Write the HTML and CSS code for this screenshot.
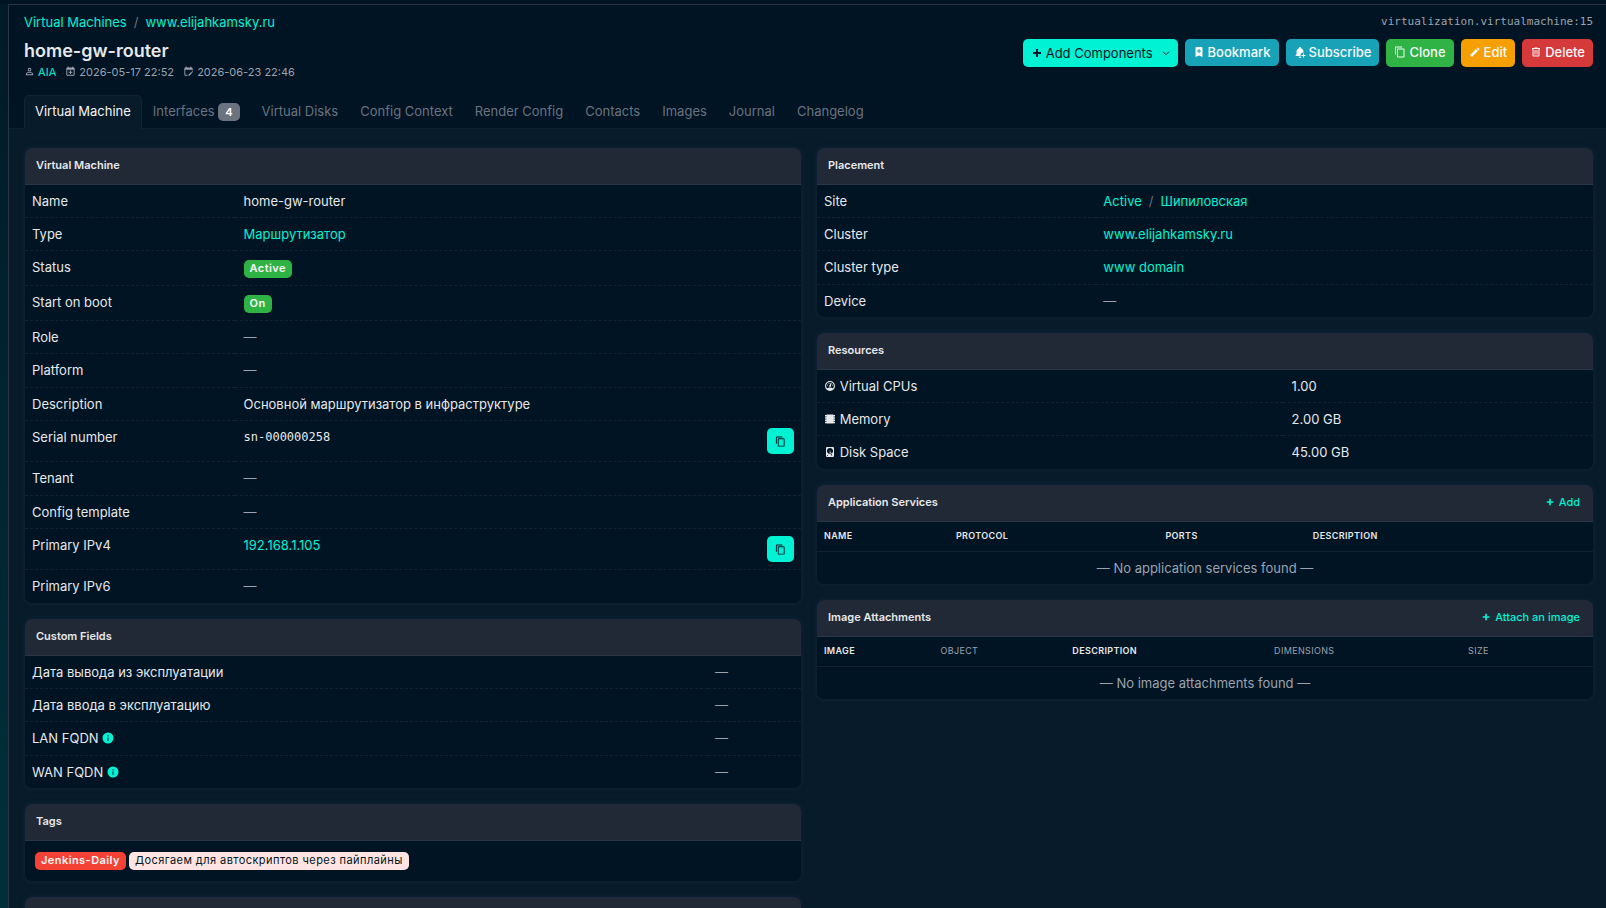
FILE: index.html
```html
<!DOCTYPE html>
<html lang="en">
<head>
    <meta charset="UTF-8">
    <meta name="viewport" content="width=device-width, initial-scale=1.0">
    <title>home-gw-router</title>
    <link rel="stylesheet" href="styles.css">
</head>
<body>
    <!-- icon set, 24x24 grid -->
    <svg class="icon-defs" aria-hidden="true">
        <symbol id="i-plus" viewBox="0 0 24 24"><path d="M20 14h-6v6h-4v-6H4v-4h6V4h4v6h6z"/></symbol>
        <symbol id="i-chevron" viewBox="0 0 24 24"><path d="M3 8l9 9 9-9" fill="none" stroke="currentColor" stroke-width="3"/></symbol>
        <symbol id="i-bookmark" viewBox="0 0 24 24"><path fill-rule="evenodd" d="M17 2H7a2 2 0 0 0-2 2v18l7-3 7 3V4a2 2 0 0 0-2-2zm-1 9h-3v3h-2v-3H8V9h3V6h2v3h3z"/></symbol>
        <symbol id="i-bell" viewBox="0 0 24 24"><path d="M13 19c0 .3 0 .7.1 1H3v-1l2-2v-6c0-3.100 2-5.800 5-6.700V4a2 2 0 0 1 4 0v.3c3 .9 5 3.600 5 6.700v2a6 6 0 0 0-6 6zm-3 2h3.300c.2.700.6 1.300 1 1.800A2 2 0 0 1 10 21zm8-6v3h-3v2h3v3h2v-3h3v-2h-3v-3z"/></symbol>
        <symbol id="i-copy" viewBox="0 0 24 24"><path d="M19 21H8V7h11m0-2H8a2 2 0 0 0-2 2v14a2 2 0 0 0 2 2h11a2 2 0 0 0 2-2V7a2 2 0 0 0-2-2m-3-4H4a2 2 0 0 0-2 2v14h2V3h12z"/></symbol>
        <symbol id="i-pencil" viewBox="0 0 24 24"><path d="M20.700 7c.4-.4.4-1 0-1.400l-2.300-2.300c-.4-.4-1-.4-1.400 0l-1.900 1.800 3.800 3.800M3 17.200V21h3.800L17.800 9.900l-3.700-3.700z"/></symbol>
        <symbol id="i-trash" viewBox="0 0 24 24"><path d="M9 3v1H4v2h1v13a2 2 0 0 0 2 2h10a2 2 0 0 0 2-2V6h1V4h-5V3H9M7 6h10v13H7V6m2 2v9h2V8H9m4 0v9h2V8z"/></symbol>
        <symbol id="i-user" viewBox="0 0 24 24"><path d="M12 4a4 4 0 1 1 0 8 4 4 0 0 1 0-8m0 2a2 2 0 1 0 0 4 2 2 0 0 0 0-4m0 7c2.700 0 8 1.300 8 4v3H4v-3c0-2.700 5.300-4 8-4m0 1.900c-3 0-6.100 1.500-6.100 2.100v1.100h12.200V17c0-.6-3.100-2.100-6.100-2.100z"/></symbol>
        <symbol id="i-cal-plus" viewBox="0 0 24 24"><path d="M19 19V8H5v11h14M16 1h2v2h1a2 2 0 0 1 2 2v14a2 2 0 0 1-2 2H5a2 2 0 0 1-2-2V5c0-1.100.9-2 2-2h1V1h2v2h8V1m-5 8.500h2v3h3v2h-3v3h-2v-3H8v-2h3z"/></symbol>
        <symbol id="i-cal-edit" viewBox="0 0 24 24"><path d="M19 3h-1V1h-2v2H8V1H6v2H5a2 2 0 0 0-2 2v14a2 2 0 0 0 2 2h5v-2H5V8h14v2h2V5a2 2 0 0 0-2-2m2.700 10.300l-1 1-2-2 1-1c.2-.2.5-.2.7 0l1.300 1.300c.2.200.2.500 0 .7M12 18.900V21h2.100l6.100-6.100-2.100-2z"/></symbol>
        <symbol id="i-gauge" viewBox="0 0 24 24"><path d="M12 2a10 10 0 1 0 0 20 10 10 0 0 0 0-20m0 2a8 8 0 0 1 6.200 13c-1.700-1.400-3.900-2-6.200-2s-4.500.6-6.200 2A8 8 0 0 1 12 4m2 1.900c-.4 0-.8.200-1 .7l-1.300 3.200-.1.200a2 2 0 1 0 2.200.8l1.300-3.200c.2-.6 0-1.200-.5-1.500a1 1 0 0 0-.6-.2M10 6a1 1 0 1 0 0 2 1 1 0 0 0 0-2M7 9a1 1 0 1 0 0 2 1 1 0 0 0 0-2m10 0a1 1 0 1 0 0 2 1 1 0 0 0 0-2z"/></symbol>
        <symbol id="i-chip" viewBox="0 0 24 24"><path d="M5 3h14v18H5zM2 4h3v3H2zm0 4.500h3v3H2zM2 13h3v3H2zm0 4.500h3v3H2zM19 4h3v3h-3zm0 4.500h3v3h-3zm0 4.500h3v3h-3zm0 4.500h3v3h-3z"/></symbol>
        <symbol id="i-disk" viewBox="0 0 24 24"><path fill-rule="evenodd" d="M6 2h12a2 2 0 0 1 2 2v16a2 2 0 0 1-2 2H6a2 2 0 0 1-2-2V4a2 2 0 0 1 2-2m6 2a6 6 0 0 0-6 6c0 3.300 2.700 6 6.100 6l-.9-2.200c-.2-.5-.1-1 .4-1.300l.9-.5c.5-.3 1.100-.1 1.400.4l1.700 2.500A6 6 0 0 0 12 4m0 5a1 1 0 1 1 0 2 1 1 0 0 1 0-2m-5 9a1 1 0 1 0 0 2 1 1 0 0 0 0-2m5.100-4.700l3 6.400 1.700-1-3.900-5.900z"/></symbol>
        <symbol id="i-info" viewBox="0 0 24 24"><path fill-rule="evenodd" d="M12 1a11 11 0 1 0 0 22 11 11 0 0 0 0-22m-1 5h2v3h-2zm0 5h2v7h-2z"/></symbol>
    </svg>

    <div class="page">
        <aside class="sidebar"></aside>
        <div class="page-main">
            <header class="page-header">
                <div class="header-row">
                    <nav class="breadcrumb" aria-label="Breadcrumb">
                        <a href="#">Virtual Machines</a>
                        <span class="sep">/</span>
                        <a href="#">www.elijahkamsky.ru</a>
                    </nav>
                    <code class="object-id">virtualization.virtualmachine:15</code>
                </div>
                <div class="header-row">
                    <div>
                        <h1 class="page-title">home-gw-router</h1>
                        <div class="meta">
                            <span><svg class="icon"><use href="#i-user"/></svg> <a href="#">AIA</a></span>
                            <span><svg class="icon"><use href="#i-cal-plus"/></svg> 2026-05-17 22:52</span>
                            <span><svg class="icon"><use href="#i-cal-edit"/></svg> 2026-06-23 22:46</span>
                        </div>
                    </div>
                    <div class="btn-list">
                        <button type="button" class="btn btn-primary"><svg class="icon"><use href="#i-plus"/></svg>Add Components<svg class="icon caret"><use href="#i-chevron"/></svg></button>
                        <button type="button" class="btn btn-cyan"><svg class="icon"><use href="#i-bookmark"/></svg>Bookmark</button>
                        <button type="button" class="btn btn-cyan"><svg class="icon"><use href="#i-bell"/></svg>Subscribe</button>
                        <a href="#" class="btn btn-green"><svg class="icon"><use href="#i-copy"/></svg>Clone</a>
                        <a href="#" class="btn btn-yellow"><svg class="icon"><use href="#i-pencil"/></svg>Edit</a>
                        <a href="#" class="btn btn-red"><svg class="icon"><use href="#i-trash"/></svg>Delete</a>
                    </div>
                </div>
                <nav class="tabs" aria-label="Object views">
                    <a href="#" class="tab active">Virtual Machine</a>
                    <a href="#" class="tab">Interfaces <span class="count">4</span></a>
                    <a href="#" class="tab">Virtual Disks</a>
                    <a href="#" class="tab">Config Context</a>
                    <a href="#" class="tab">Render Config</a>
                    <a href="#" class="tab">Contacts</a>
                    <a href="#" class="tab">Images</a>
                    <a href="#" class="tab">Journal</a>
                    <a href="#" class="tab">Changelog</a>
                </nav>
            </header>

            <main class="page-body">
                <div class="col">
                    <section class="card">
                        <h2 class="card-header">Virtual Machine</h2>
                        <table class="attrs attrs-vm">
                            <tr><th scope="row">Name</th><td>home-gw-router</td></tr>
                            <tr><th scope="row">Type</th><td><a href="#">Маршрутизатор</a></td></tr>
                            <tr><th scope="row">Status</th><td><span class="badge badge-green">Active</span></td></tr>
                            <tr><th scope="row">Start on boot</th><td><span class="badge badge-green">On</span></td></tr>
                            <tr><th scope="row">Role</th><td class="muted">—</td></tr>
                            <tr><th scope="row">Platform</th><td class="muted">—</td></tr>
                            <tr><th scope="row">Description</th><td>Основной маршрутизатор в инфраструктуре</td></tr>
                            <tr>
                                <th scope="row">Serial number</th>
                                <td><div class="copy-row"><span class="mono">sn-000000258</span><button type="button" class="btn-copy" aria-label="Copy serial number"><svg class="icon"><use href="#i-copy"/></svg></button></div></td>
                            </tr>
                            <tr><th scope="row">Tenant</th><td class="muted">—</td></tr>
                            <tr><th scope="row">Config template</th><td class="muted">—</td></tr>
                            <tr>
                                <th scope="row">Primary IPv4</th>
                                <td><div class="copy-row"><a href="#">192.168.1.105</a><button type="button" class="btn-copy" aria-label="Copy IPv4 address"><svg class="icon"><use href="#i-copy"/></svg></button></div></td>
                            </tr>
                            <tr><th scope="row">Primary IPv6</th><td class="muted">—</td></tr>
                        </table>
                    </section>

                    <section class="card">
                        <h2 class="card-header">Custom Fields</h2>
                        <table class="attrs attrs-custom">
                            <tr><th scope="row">Дата вывода из эксплуатации</th><td class="muted">—</td></tr>
                            <tr><th scope="row">Дата ввода в эксплуатацию</th><td class="muted">—</td></tr>
                            <tr><th scope="row">LAN FQDN <svg class="icon info"><use href="#i-info"/></svg></th><td class="muted">—</td></tr>
                            <tr><th scope="row">WAN FQDN <svg class="icon info"><use href="#i-info"/></svg></th><td class="muted">—</td></tr>
                        </table>
                    </section>

                    <section class="card">
                        <h2 class="card-header">Tags</h2>
                        <div class="card-body">
                            <a href="#" class="badge badge-red">Jenkins-Daily</a>
                            <a href="#" class="badge badge-pink">Досягаем для автоскриптов через пайплайны</a>
                        </div>
                    </section>

                    <section class="card">
                        <div class="card-header"></div>
                    </section>
                </div>

                <div class="col">
                    <section class="card">
                        <h2 class="card-header">Placement</h2>
                        <table class="attrs attrs-placement">
                            <tr><th scope="row">Site</th><td><span class="breadcrumb"><a href="#">Active</a> <span class="sep">/</span> <a href="#">Шипиловская</a></span></td></tr>
                            <tr><th scope="row">Cluster</th><td><a href="#">www.elijahkamsky.ru</a></td></tr>
                            <tr><th scope="row">Cluster type</th><td><a href="#">www domain</a></td></tr>
                            <tr><th scope="row">Device</th><td class="muted">—</td></tr>
                        </table>
                    </section>

                    <section class="card">
                        <h2 class="card-header">Resources</h2>
                        <table class="attrs attrs-resources">
                            <tr><th scope="row"><svg class="icon"><use href="#i-gauge"/></svg> Virtual CPUs</th><td>1.00</td></tr>
                            <tr><th scope="row"><svg class="icon"><use href="#i-chip"/></svg> Memory</th><td>2.00 GB</td></tr>
                            <tr><th scope="row"><svg class="icon"><use href="#i-disk"/></svg> Disk Space</th><td>45.00 GB</td></tr>
                        </table>
                    </section>

                    <section class="card">
                        <h2 class="card-header">Application Services <a href="#" class="card-action"><svg class="icon"><use href="#i-plus"/></svg>Add</a></h2>
                        <table class="list">
                            <colgroup><col class="w-17"><col class="w-27"><col class="w-19"><col></colgroup>
                            <thead>
                                <tr><th>Name</th><th>Protocol</th><th>Ports</th><th>Description</th></tr>
                            </thead>
                            <tbody>
                                <tr><td colspan="4">— No application services found —</td></tr>
                            </tbody>
                        </table>
                    </section>

                    <section class="card">
                        <h2 class="card-header">Image Attachments <a href="#" class="card-action"><svg class="icon"><use href="#i-plus"/></svg>Attach an image</a></h2>
                        <table class="list">
                            <colgroup><col class="w-15"><col class="w-17"><col class="w-26"><col class="w-25"><col></colgroup>
                            <thead>
                                <tr><th>Image</th><th class="plain">Object</th><th>Description</th><th class="plain">Dimensions</th><th class="plain">Size</th></tr>
                            </thead>
                            <tbody>
                                <tr><td colspan="5">— No image attachments found —</td></tr>
                            </tbody>
                        </table>
                    </section>
                </div>
            </main>
        </div>
    </div>
</body>
</html>
```

FILE: styles.css
```css
* {
    box-sizing: border-box;
}

body {
    margin: 0;
    height: 100vh;
    overflow: hidden;
    background-color: #001423;
    color: #e6e8eb;
    font-family: Inter, "Noto Sans", sans-serif;
    font-size: 13px;
    line-height: 18px;
}

a {
    color: #00f2d4;
    text-decoration: none;
}

h1,
h2 {
    margin: 0;
}

.icon-defs {
    display: none;
}

.icon {
    width: 12px;
    height: 12px;
    fill: currentColor;
    vertical-align: -1px;
}

.muted {
    color: #9ca3af;
}

.mono {
    font-family: "DejaVu Sans Mono", monospace;
    font-size: 12px;
}

/* page frame */
.page {
    display: flex;
    height: 100vh;
    padding-top: 4px;
}

.sidebar {
    flex: 0 0 8px;
    background: linear-gradient(#001a28, #00303a);
}

.page-main {
    flex: 1;
    min-width: 0;
    border-top: 1px solid #2a3645;
    border-left: 1px solid #2a3645;
    background-color: #081b2a;
}

.page-header {
    padding: 8px 13px 0 15px;
    background-color: #001423;
    border-bottom: 1px solid #0b2235;
}

.header-row {
    display: flex;
    justify-content: space-between;
    align-items: flex-start;
    margin-bottom: 8px;
}

.breadcrumb {
    display: inline-flex;
    gap: 7px;
}

.sep {
    color: #6b7280;
}

.object-id {
    color: #9ca3af;
    font-family: "DejaVu Sans Mono", monospace;
    font-size: 11px;
}

.page-title {
    font-size: 18px;
    line-height: 24px;
    font-weight: 600;
}

.meta {
    display: flex;
    gap: 9px;
    color: #9ca3af;
    font-size: 11px;
}

.meta .icon {
    width: 11px;
    height: 11px;
}

/* buttons */
.btn-list {
    display: flex;
    gap: 7px;
}

.btn {
    display: inline-flex;
    align-items: center;
    gap: 3px;
    height: 28px;
    padding: 0 8px 2px;
    border: 0;
    border-radius: 5px;
    color: #f9fafb;
    font: 500 13px/18px Inter, "Noto Sans", sans-serif;
    white-space: nowrap;
}

.btn-primary {
    padding-bottom: 0;
    background-color: #00f2d4;
    color: #001423;
    font-weight: 400;
}

.btn-primary .caret {
    width: 8px;
    height: 8px;
    margin-left: 6px;
}

.btn-cyan {
    height: 27px;
    background-color: #17a2b8;
}

.btn-green {
    background-color: #2fb344;
}

.btn-yellow {
    background-color: #f59f00;
}

.btn-red {
    background-color: #d63939;
}

/* tabs */
.tabs {
    display: flex;
    margin-top: 14px;
    margin-bottom: -1px;
}

.tab {
    padding: 6px 10px 8px;
    border: 1px solid transparent;
    border-bottom: 0;
    border-radius: 5px 5px 0 0;
    color: #6b7280;
}

.tab.active {
    border-color: #0f2536;
    background-color: #081b2a;
    color: #f3f4f6;
}

.count {
    display: inline-block;
    padding: 0 7px;
    border-radius: 5px;
    background-color: #6b7280;
    color: #fff;
    font-size: 11px;
    font-weight: 600;
}

/* cards */
.page-body {
    display: grid;
    grid-template-columns: 1fr 1fr;
    gap: 16px;
    padding: 19px 13px 0 16px;
}

.col {
    display: flex;
    flex-direction: column;
    gap: 16px;
    min-width: 0;
}

.card {
    border-radius: 7px;
    overflow: hidden;
    background-color: #001423;
    box-shadow: 0 0 4px 1px #0c2436;
}

.card-header {
    display: flex;
    justify-content: space-between;
    align-items: flex-start;
    height: 37px;
    padding: 8px 13px 0 11px;
    border-bottom: 1px solid #2a3645;
    background-color: #212936;
    font-size: 11px;
    font-weight: 600;
}

.card-action {
    display: flex;
    align-items: center;
    gap: 4px;
    font-weight: 500;
}

.card-action .icon {
    width: 10px;
    height: 10px;
}

.card-body {
    display: flex;
    gap: 3px;
    padding: 11px 10px;
}

.badge {
    display: inline-block;
    height: 18px;
    padding: 0 6px;
    border-radius: 5px;
    color: #f9fafb;
    font-size: 11px;
    line-height: 17px;
    font-weight: 600;
    letter-spacing: 0.04em;
}

.badge-green {
    background-color: #2fb344;
}

.badge-red {
    background-color: #f44336;
}

.badge-pink {
    background-color: #ffe4e1;
    color: #001423;
    font-weight: 400;
}

/* tables */
table {
    width: 100%;
    table-layout: fixed;
    border-collapse: collapse;
}

th,
td {
    padding: 7px;
    text-align: left;
    vertical-align: top;
}

.attrs th {
    font-weight: 400;
}

.attrs tr + tr {
    border-top: 1px dashed #0c2436;
}

.attrs tr:nth-child(3n) th {
    padding-bottom: 8px;
}

.attrs-vm th {
    width: 27%;
}

.attrs-custom th {
    width: 88%;
}

.attrs-placement th {
    width: 36%;
}

.attrs-resources th {
    width: 60%;
}

.attrs-vm td,
.attrs-resources td {
    padding-left: 9px;
}

.info {
    color: #00f2d4;
}

.copy-row {
    display: flex;
    justify-content: space-between;
    align-items: flex-start;
}

.btn-copy {
    display: flex;
    align-items: center;
    justify-content: center;
    width: 27px;
    height: 26px;
    padding: 0;
    border: 0;
    border-radius: 5px;
    background-color: #00f2d4;
    color: #001423;
}

.btn-copy .icon {
    width: 11px;
    height: 11px;
}

.list th {
    padding: 5px 7px 6px;
    border-bottom: 1px solid #0c2436;
    font-size: 9px;
    font-weight: 600;
    letter-spacing: 0.04em;
    text-transform: uppercase;
}

.list th.plain {
    color: #9ca3af;
    font-weight: 400;
}

.list td {
    color: #9ca3af;
    text-align: center;
}

.w-15 {
    width: 15%;
}

.w-17 {
    width: 17%;
}

.w-19 {
    width: 19%;
}

.w-25 {
    width: 25%;
}

.w-26 {
    width: 26%;
}

.w-27 {
    width: 27%;
}
```
